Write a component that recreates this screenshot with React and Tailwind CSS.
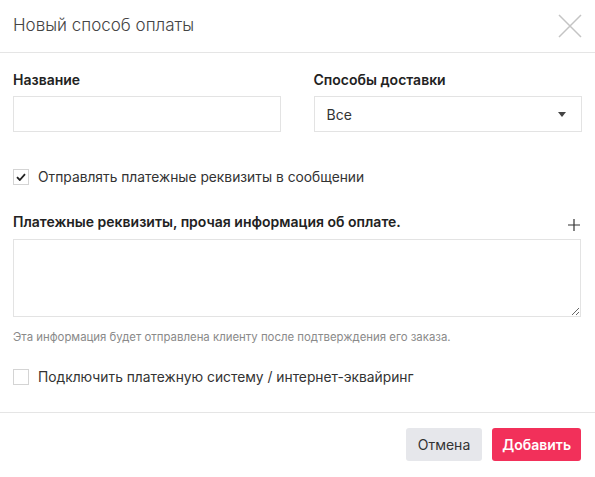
import React, { useState } from 'react';

const Checkbox = ({ checked, onChange, label }) => (
  <label className="flex items-center gap-[9px] cursor-pointer h-[20px]">
    <span className="w-[16px] h-[16px] border border-[#d4d4d4] bg-white flex items-center justify-center">
      {checked && (
        <svg width="10" height="8" viewBox="0 0 10 8">
          <path d="M1 4.2 L3.8 7 L9 1.2" fill="none" stroke="#222" strokeWidth="1.8" />
        </svg>
      )}
    </span>
    <input type="checkbox" className="hidden" checked={checked} onChange={onChange} />
    <span className="text-[13.8px] leading-[20px] text-[#333]">{label}</span>
  </label>
);

export default function App() {
  const [name, setName] = useState('');
  const [sendDetails, setSendDetails] = useState(true);
  const [acquiring, setAcquiring] = useState(false);
  const [details, setDetails] = useState('');

  return (
    <div className="w-[595px] h-[477px] bg-white font-['Inter',sans-serif] text-[#333]">
      <div className="h-[53px] flex items-center justify-between pl-[13px] pr-[13px] border-b border-[#e5e5e5]">
        <h2 className="text-[17px] font-light text-[#444]">Новый способ оплаты</h2>
        <button className="w-[24px] h-[24px] flex items-center justify-center">
          <svg width="24" height="24" viewBox="0 0 24 24">
            <path d="M1 1 L23 23 M23 1 L1 23" stroke="#c4c4c4" strokeWidth="1.5" />
          </svg>
        </button>
      </div>

      <div className="px-[13px] pt-[19px]">
        <div className="grid grid-cols-2 gap-[32px]">
          <div>
            <div className="text-[14px] leading-[16px] font-semibold text-[#222] mb-[8px]">Название</div>
            <input
              value={name}
              onChange={(e) => setName(e.target.value)}
              className="w-[268px] h-[36px] border border-[#e3e3e3] px-[12px] text-[14px] outline-none block"
            />
          </div>
          <div>
            <div className="text-[14px] leading-[16px] font-semibold text-[#222] mb-[8px]">Способы доставки</div>
            <div className="w-[268px] h-[36px] border border-[#e3e3e3] flex items-center justify-between pl-[12px] pr-[15px]">
              <span className="text-[14px] text-[#333]">Все</span>
              <svg width="8" height="5" viewBox="0 0 8 5">
                <path d="M0 0 H8 L4 5 Z" fill="#444" />
              </svg>
            </div>
          </div>
        </div>

        <div className="mt-[35px]">
          <Checkbox
            checked={sendDetails}
            onChange={() => setSendDetails(!sendDetails)}
            label="Отправлять платежные реквизиты в сообщении"
          />
        </div>

        <div className="mt-[27px] flex items-center justify-between h-[16px]">
          <div className="text-[14px] leading-[16px] font-semibold text-[#222]">Платежные реквизиты, прочая информация об оплате.</div>
          <svg width="12" height="12" viewBox="0 0 12 12" className="mr-[2px] mt-[6px]">
            <path d="M6 0 V12 M0 6 H12" stroke="#333" strokeWidth="1.2" />
          </svg>
        </div>
        <textarea
          value={details}
          onChange={(e) => setDetails(e.target.value)}
          className="mt-[9px] w-[568px] h-[78px] border border-[#e3e3e3] block outline-none p-[8px] text-[14px]"
        />
        <div className="mt-[12px] text-[11.4px] leading-[16px] text-[#8a8a8a]">
          Эта информация будет отправлена клиенту после подтверждения его заказа.
        </div>

        <div className="mt-[22px]">
          <Checkbox
            checked={acquiring}
            onChange={() => setAcquiring(!acquiring)}
            label="Подключить платежную систему / интернет-эквайринг"
          />
        </div>
      </div>

      <div className="mt-[25px] border-t border-[#e5e5e5] flex justify-end gap-[10px] px-[14px] pt-[15px]">
        <button className="h-[33px] px-[12px] rounded-[3px] bg-[#e6e7eb] text-[14px] text-[#333]">Отмена</button>
        <button className="h-[33px] px-[10px] rounded-[3px] bg-[#f2305a] text-[14px] font-semibold text-white">Добавить</button>
      </div>
    </div>
  );
}
